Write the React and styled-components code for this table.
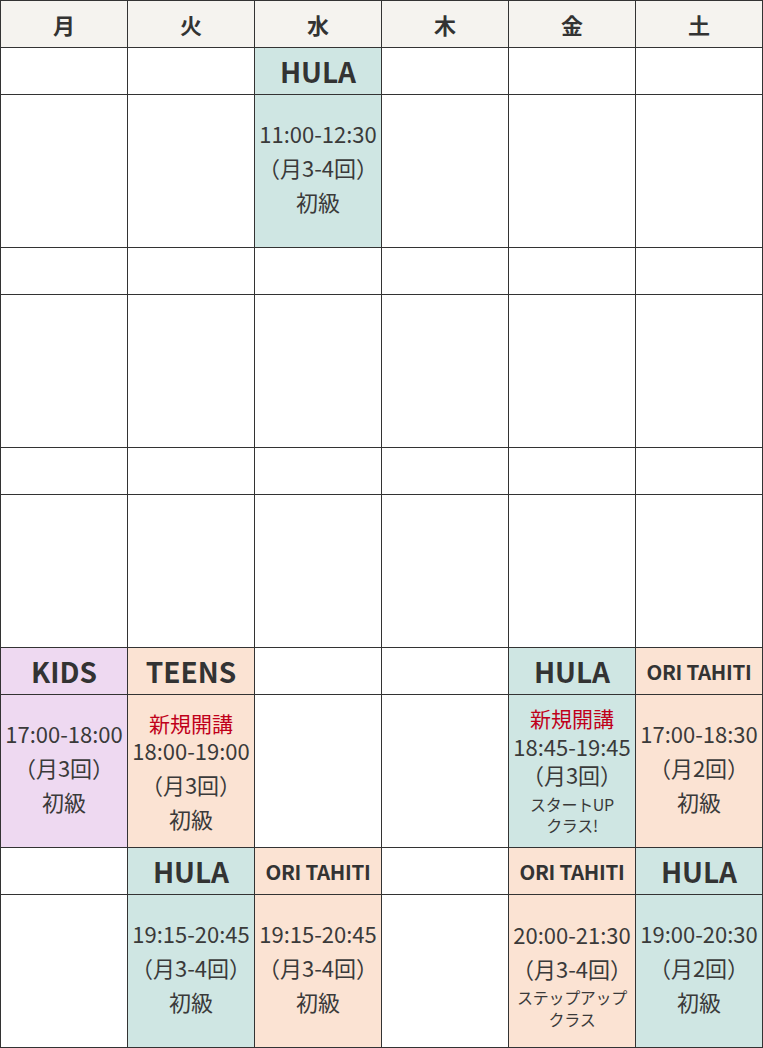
import React from 'react';
import styled, { createGlobalStyle } from 'styled-components';

const GlobalStyle = createGlobalStyle`
  html, body { margin: 0; padding: 0; background: #fff; }
  body { font-family: "Noto Sans CJK JP", "Noto Sans", sans-serif; color: #333; }
`;

const COLORS = {
  teal: '#cfe6e3',
  purple: '#eed9f1',
  peach: '#fbe3d3',
  none: '#fff',
};

const days = ['月', '火', '水', '木', '金', '土'];

// each slot: 6 cells, null = empty. line = [text, kind, height, marginTop]
const slots = [
  [
    null,
    null,
    { title: 'HULA', color: 'teal', lines: [['11:00-12:30'], ['（月3-4回）'], ['初級']] },
    null,
    null,
    null,
  ],
  [null, null, null, null, null, null],
  [null, null, null, null, null, null],
  [
    { title: 'KIDS', color: 'purple', lines: [['17:00-18:00'], ['（月3回）'], ['初級']] },
    {
      title: 'TEENS',
      color: 'peach',
      pt: 14,
      lines: [['新規開講', 'red', 20], ['18:00-19:00'], ['（月3回）'], ['初級']],
    },
    null,
    null,
    {
      title: 'HULA',
      color: 'teal',
      pt: 5,
      lines: [
        ['新規開講', 'red', 28],
        ['18:45-19:45', null, 28],
        ['（月3回）', null, 28],
        ['スタートUP', 'small', 20, 6],
        ['クラス!', 'small', 22],
      ],
    },
    { title: 'ORI TAHITI', small: true, color: 'peach', lines: [['17:00-18:30'], ['（月2回）'], ['初級']] },
  ],
  [
    null,
    { title: 'HULA', color: 'teal', lines: [['19:15-20:45'], ['（月3-4回）'], ['初級']] },
    { title: 'ORI TAHITI', small: true, color: 'peach', lines: [['19:15-20:45'], ['（月3-4回）'], ['初級']] },
    null,
    {
      title: 'ORI TAHITI',
      small: true,
      color: 'peach',
      pt: 12,
      lines: [['20:00-21:30'], ['（月3-4回）'], ['ステップアップ', 'small', 24], ['クラス', 'small', 20]],
    },
    { title: 'HULA', color: 'teal', lines: [['19:00-20:30'], ['（月2回）'], ['初級']] },
  ],
];

export default function App() {
  return (
    <>
      <GlobalStyle />
      <Schedule>
        {days.map((d) => (
          <DayHead key={d}>{d}</DayHead>
        ))}
        {slots.map((slot, si) => (
          <React.Fragment key={si}>
            {slot.map((c, ci) => (
              <TitleCell key={'t' + ci} $bg={COLORS[c ? c.color : 'none']} $small={c && c.small}>
                {c ? c.title : ''}
              </TitleCell>
            ))}
            {slot.map((c, ci) => (
              <BodyCell key={'b' + ci} $bg={COLORS[c ? c.color : 'none']} $pt={c && c.pt}>
                {c &&
                  c.lines.map(([text, kind, h, mt], li) => (
                    <Line key={li} $kind={kind} $h={h} $mt={mt}>
                      {text}
                    </Line>
                  ))}
              </BodyCell>
            ))}
          </React.Fragment>
        ))}
      </Schedule>
    </>
  );
}

const Schedule = styled.div`
  display: grid;
  grid-template-columns: repeat(6, 126px);
  grid-template-rows: 46px repeat(5, 46px 152px);
  gap: 1px;
  padding: 1px;
  width: 763px;
  box-sizing: border-box;
  background: #333;
`;

const DayHead = styled.div`
  background: #f5f3ef;
  display: flex;
  align-items: center;
  justify-content: center;
  font-size: 22px;
  font-weight: 700;
  color: #333;
`;

const TitleCell = styled.div`
  background: ${(p) => p.$bg};
  display: flex;
  align-items: center;
  justify-content: center;
  font-size: ${(p) => (p.$small ? '20.5px' : '28px')};
  font-weight: 600;
  color: #333;
  white-space: nowrap;
  letter-spacing: ${(p) => (p.$small ? '-0.3px' : '0')};
`;

const BodyCell = styled.div`
  background: ${(p) => p.$bg};
  display: flex;
  flex-direction: column;
  align-items: center;
  justify-content: center;
  padding-top: ${(p) => (p.$pt || 0) + 'px'};
  padding-bottom: 8px;
  box-sizing: border-box;
`;

const lineHeight = (p) => (p.$h ? p.$h : p.$kind === 'small' ? 22 : 34) + 'px';

const Line = styled.div`
  height: ${lineHeight};
  line-height: ${lineHeight};
  margin-top: ${(p) => (p.$mt || 0) + 'px'};
  font-size: ${(p) => (p.$kind === 'small' ? '16px' : p.$kind === 'red' ? '21px' : '22px')};
  color: ${(p) => (p.$kind === 'red' ? '#c0001a' : '#3a3a3a')};
  white-space: nowrap;
  letter-spacing: ${(p) => (p.$kind === 'small' ? '-0.3px' : '0')};
`;
